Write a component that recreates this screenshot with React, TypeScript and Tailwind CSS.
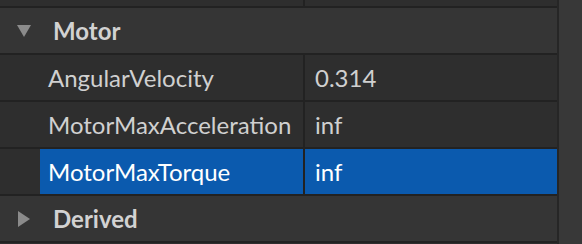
import { ReactNode } from 'react';

type Prop = { name: string; value: string; selected?: boolean };

const motorProps: Prop[] = [
  { name: 'AngularVelocity', value: '0.314' },
  { name: 'MotorMaxAcceleration', value: 'inf' },
  { name: 'MotorMaxTorque', value: 'inf', selected: true },
];

function Caret({ open }: { open: boolean }) {
  return (
    <svg width="16" height="16" viewBox="0 0 16 16" className="shrink-0">
      {open ? (
        <polygon points="1,2 15,2 8,14" fill="#8b8b8b" />
      ) : (
        <polygon points="2,0 14,8 2,16" fill="#8b8b8b" />
      )}
    </svg>
  );
}

function Section({ title, open }: { title: string; open: boolean }) {
  return (
    <div className="h-[45px] flex items-center bg-[#353535] border-b-2 border-[#222222] box-content">
      <div className="w-[53px] pl-[16px] flex items-center">
        <Caret open={open} />
      </div>
      <span className="text-[24px] font-bold text-[#d2d2d2]">{title}</span>
    </div>
  );
}

function Row({ prop }: { prop: Prop }) {
  const sel = prop.selected;
  return (
    <div className="h-[45px] flex bg-[#2e2e2e] border-b-2 border-[#222222] box-content">
      <div className="w-[40px] shrink-0" />
      <div
        className={
          sel
            ? 'w-[263px] flex items-center pl-[8px] bg-[#0b5aae] text-white'
            : 'w-[263px] flex items-center pl-[8px] text-[#d0d0d0]'
        }
      >
        <span className="whitespace-nowrap">{prop.name}</span>
      </div>
      <div className="w-[2px] bg-[#222222]" />
      <div
        className={
          sel
            ? 'flex-1 flex items-center pl-[10px] bg-[#0b5aae] text-white'
            : 'flex-1 flex items-center pl-[10px] text-[#d0d0d0]'
        }
      >
        {prop.value}
      </div>
    </div>
  );
}

function Panel({ children }: { children: ReactNode }) {
  return (
    <div className="w-[582px] h-[244px] overflow-hidden flex bg-[#2e2e2e]">
      <div className="w-[557px] shrink-0">{children}</div>
      <div className="w-[2px] bg-[#262626]" />
      <div className="flex-1 bg-[#383838]" />
    </div>
  );
}

export default function App() {
  return (
    <div className="text-[24px]" style={{ fontFamily: 'Lato, "Noto Sans", sans-serif' }}>
      <Panel>
        {/* tail of the row above */}
        <div className="h-[6px] flex bg-[#2e2e2e] border-b-2 border-[#222222] box-content">
          <div className="w-[303px]" />
          <div className="w-[2px] bg-[#222222]" />
        </div>
        <Section title="Motor" open />
        {motorProps.map((p) => (
          <Row key={p.name} prop={p} />
        ))}
        <Section title="Derived" open={false} />
      </Panel>
    </div>
  );
}
